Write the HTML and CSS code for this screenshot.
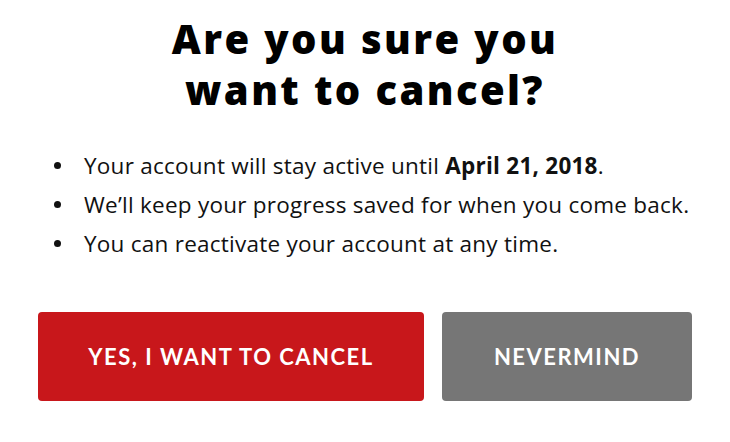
FILE: index.html
```html
<!DOCTYPE html>
<html lang="en">
<head>
    <meta charset="UTF-8">
    <title>Cancel Subscription</title>
    <link rel="stylesheet" href="styles.css">
</head>
<body>
    <div class="modal">
        <h1>Are you sure you<br>want to cancel?</h1>
        <ul class="notes">
            <li>Your account will stay active until <strong>April 21, 2018</strong>.</li>
            <li>We’ll keep your progress saved for when you come back.</li>
            <li>You can reactivate your account at any time.</li>
        </ul>
        <div class="actions">
            <button class="btn btn-cancel">Yes, I want to cancel</button>
            <button class="btn btn-back">Nevermind</button>
        </div>
    </div>
</body>
</html>
```

FILE: styles.css
```css
body {
    margin: 0;
    background: #ffffff;
    color: #111111;
    font-family: 'Open Sans', sans-serif;
}
.modal {
    padding: 13px 38px 0;
}
h1 {
    margin: 0;
    text-align: center;
    font-family: 'Open Sans', sans-serif;
    font-weight: 800;
    font-size: 40px;
    line-height: 51px;
    letter-spacing: 2.4px;
    color: #000000;
}
.notes {
    margin: 31px 0 0;
    padding-left: 46px;
    list-style: none;
    font-size: 22.5px;
    line-height: 39px;
    letter-spacing: 0.25px;
}
.notes li::before {
    content: "";
    display: inline-block;
    width: 7px;
    height: 7px;
    border-radius: 50%;
    background: #111111;
    margin-left: -30px;
    margin-right: 23px;
    vertical-align: 5px;
}
.notes strong {
    font-weight: 700;
}
.actions {
    display: flex;
    gap: 18px;
    margin-top: 49px;
}
.btn {
    height: 89px;
    border: none;
    border-radius: 4px;
    color: #ffffff;
    font-family: 'Lato', sans-serif;
    font-weight: 700;
    font-size: 22px;
    letter-spacing: 1.5px;
    text-transform: uppercase;
    cursor: pointer;
}
.btn-cancel {
    width: 386px;
    background: #c8171b;
}
.btn-back {
    flex: 1;
    background: #767676;
}
```
